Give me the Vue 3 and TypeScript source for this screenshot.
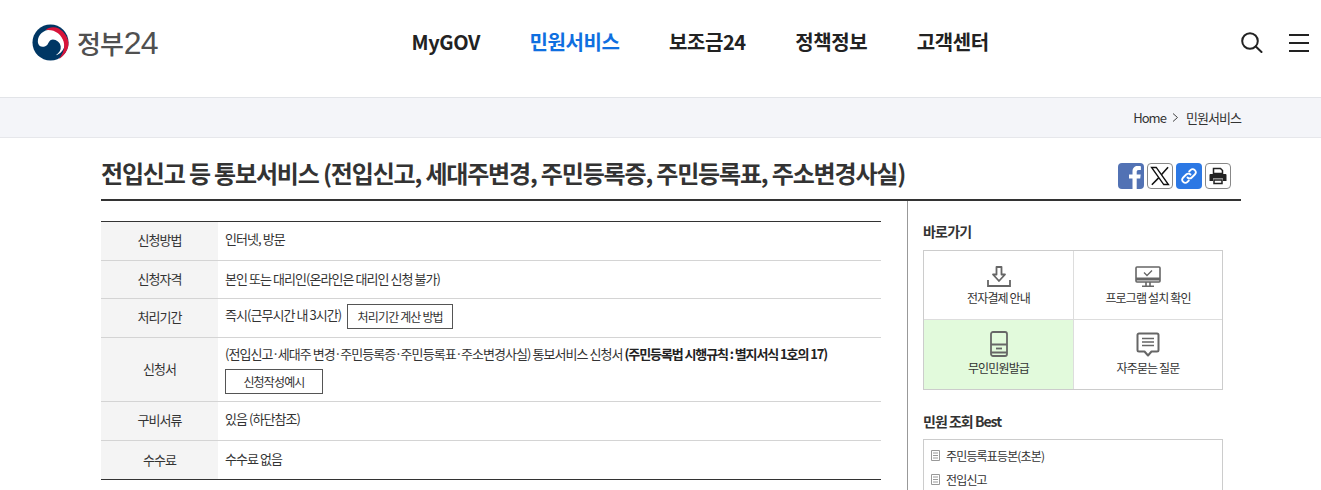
<script setup lang="ts">
const nav = [
  { label: 'MyGOV', active: false },
  { label: '민원서비스', active: true },
  { label: '보조금24', active: false },
  { label: '정책정보', active: false },
  { label: '고객센터', active: false },
]
const best = ['주민등록표등본(초본)', '전입신고']
const forms = ['전입신고', '세대주 변경', '주민등록증', '주민등록표', '주소변경사실']
</script>

<template>
  <div class="page">
    <header class="header">
      <div class="logo">
        <svg class="mark" width="37" height="37" viewBox="0 0 38 38">
          <circle cx="19" cy="19" r="18.5" fill="#003764" />
          <path d="M6 18C6 11 12 6 19 6C27 6 33.5 13 33.5 21C33.5 26 29 31 24.5 32C28 29.5 30 26.5 29.5 23C29 19 25 16 21.5 16C18 16 17.5 19 16 21C14 23.5 10 24 8 22.500C6.800 21.500 6 20 6 18Z" fill="#fff" />
          <path d="M14 6C17 3 23 2.500 27.500 4.500C33.500 8 37.800 14.500 37.500 21C37 27 32.500 33 27.500 36C31 31.500 33.500 26.500 33 21C32.500 14 26.500 7.500 19.500 6.500C17.500 6.200 15.500 6 14 6Z" fill="#d8143a" />
        </svg>
        <span class="logo-text"><span class="ko">정부</span>24</span>
      </div>
      <nav class="nav">
        <a v-for="n in nav" :key="n.label" :class="{ active: n.active }">{{ n.label }}</a>
      </nav>
      <div class="tools">
        <svg width="22" height="21" viewBox="0 0 22 21" fill="none" stroke="#222" stroke-width="2">
          <circle cx="9" cy="9" r="7.800" />
          <path d="M14.800 14.500 20.500 20" stroke-linecap="round" />
        </svg>
        <svg width="20" height="18" viewBox="0 0 20 18" fill="none" stroke="#222" stroke-width="2">
          <path d="M0 1h20M0 9h20M0 17h20" />
        </svg>
      </div>
    </header>

    <div class="crumb">
      <div class="crumb-in">
        <span>Home</span>
        <svg width="7" height="9" viewBox="0 0 7 9" fill="none" stroke="#444"><path d="M1 .5 5.500 4.500 1 8.500" /></svg>
        <span>민원서비스</span>
      </div>
    </div>

    <main class="wrap">
      <div class="title-row">
        <h1>전입신고 등 통보서비스 (전입신고, 세대주변경, 주민등록증, 주민등록표, 주소변경사실)</h1>
        <div class="share">
          <span class="sq fb">
            <svg width="26" height="26" viewBox="0 0 26 26"><path d="M14.500 26V15.500h-3.500v-4h3.500V8.500c0-3.500 2.100-5.400 5.200-5.400 1.500 0 2.800.1 3.200.2v3.600h-2.200c-1.700 0-2 .8-2 2v2.500h4l-.5 4h-3.500V26Z" fill="#fff" /></svg>
          </span>
          <span class="sq line">
            <svg width="22" height="22" viewBox="0 0 24 24" fill="none" stroke="#111"><path d="M2.800 2.700h5.100l13.300 18.600h-5.100Z" stroke-width="1.500" /><path d="M20.800 2.500 13.500 10.700M10.500 14 3.100 21.500" stroke-width="1.700" /></svg>
          </span>
          <span class="sq link">
            <svg width="18" height="18" viewBox="0 0 18 18" fill="none" stroke="#fff" stroke-width="1.800" stroke-linecap="round"><path d="M7.500 10.500a3 3 0 0 0 4.300 0l3-3a3 3 0 0 0-4.300-4.300L9.200 4.500" /><path d="M10.500 7.500a3 3 0 0 0-4.300 0l-3 3a3 3 0 0 0 4.300 4.300l1.300-1.300" /></svg>
          </span>
          <span class="sq line">
            <svg width="18" height="18" viewBox="0 0 18 18"><path d="M4.500 1.500h7l2 2v3h-9Z" fill="none" stroke="#222" stroke-width="1.500" /><path d="M1.500 7h15a1 1 0 0 1 1 1v6h-3.500v-2.500H4V14H.5V8a1 1 0 0 1 1-1Z" fill="#222" /><path d="M5 13h8v3.500H5Z" fill="none" stroke="#222" stroke-width="1.500" /></svg>
          </span>
        </div>
      </div>

      <div class="cols">
        <section class="main">
          <table class="info">
            <tbody>
              <tr class="r1"><th>신청방법</th><td>인터넷, 방문</td></tr>
              <tr class="r2"><th>신청자격</th><td>본인 또는 대리인(온라인은 대리인 신청 불가)</td></tr>
              <tr class="r3"><th>처리기간</th><td>즉시(근무시간 내 3시간)<a class="btn btn-a">처리기간 계산 방법</a></td></tr>
              <tr class="r4"><th>신청서</th><td>
                <div>(<template v-for="(f, i) in forms" :key="f"><span v-if="i" class="dot">·</span>{{ f }}</template>) 통보서비스 신청서 <b>(주민등록법 시행규칙 : 별지서식 1호의 17)</b></div>
                <a class="btn btn-b">신청작성예시</a>
              </td></tr>
              <tr class="r5"><th>구비서류</th><td>있음 (하단참조)</td></tr>
              <tr class="r6"><th>수수료</th><td>수수료 없음</td></tr>
            </tbody>
          </table>
        </section>

        <aside class="side">
          <h2>바로가기</h2>
          <div class="quick">
            <a class="q">
              <svg width="24" height="21" viewBox="0 0 24 21" fill="none" stroke="#666" stroke-width="1.800">
                <path d="M9.500 1h5v7.500h3.500L12 15 6 8.500h3.500Z" stroke-linejoin="round" />
                <path d="M1 14v6h22v-6" />
              </svg>
              <span>전자결제 안내</span>
            </a>
            <a class="q">
              <svg width="26" height="21" viewBox="0 0 26 21" fill="none" stroke="#666" stroke-width="1.600">
                <rect x="1" y="1" width="24" height="15" rx="1" />
                <path d="M1 13h24" stroke-width="3" />
                <path d="M9 6.500l3 3 5-5" stroke-width="1.300" />
                <path d="M11 16v4M15 16v4M7 20.200h12" />
              </svg>
              <span>프로그램 설치 확인</span>
            </a>
            <a class="q green">
              <svg width="18" height="26" viewBox="0 0 18 26" fill="none" stroke="#666" stroke-width="1.800">
                <rect x="1" y="1" width="16" height="24" rx="2" />
                <path d="M1 13.500h16M1 21.500h16" />
                <path d="M6 17.500h6" />
              </svg>
              <span>무인민원발급</span>
            </a>
            <a class="q">
              <svg width="24" height="25" viewBox="0 0 24 25" fill="none" stroke="#666" stroke-width="2">
                <path d="M3 1.500h18a1.500 1.500 0 0 1 1.500 1.500v15a1.500 1.500 0 0 1-1.500 1.500h-5.500L12 23.500l-3.500-4H3A1.500 1.500 0 0 1 1.500 18V3A1.500 1.500 0 0 1 3 1.500Z" stroke-linejoin="round" />
                <path d="M6 6.500h12M6 10h12M6 13.500h12" stroke-width="1.500" />
              </svg>
              <span>자주묻는 질문</span>
            </a>
          </div>

          <h2 class="h-best">민원 조회 Best</h2>
          <ul class="best">
            <li v-for="b in best" :key="b">
              <svg width="9" height="11" viewBox="0 0 9 11" fill="none" stroke="#999"><path d="M.5.500h8v10h-8ZM2 3h5M2 5.500h5M2 8h5" /></svg>
              <span>{{ b }}</span>
            </li>
          </ul>
        </aside>
      </div>
    </main>
  </div>
</template>

<style>
html, body { margin: 0; height: 490px; overflow: hidden; background: #fff; }
</style>

<style scoped>
.page {
  height: 490px;
  overflow: hidden;
  font-family: "Noto Sans CJK KR", "Noto Sans", sans-serif;
  color: #333;
  font-size: 13px;
  letter-spacing: -0.95px;
}
.header {
  display: flex;
  align-items: flex-start;
  position: relative;
  box-sizing: border-box;
  border-bottom: 1px solid #e2e4e8;
  height: 98px;
}
.logo { display: flex; align-items: center; gap: 8px; margin: 24px 0 0 32px; height: 37px; }
.logo-text { font-family: "Liberation Sans", sans-serif; font-size: 32px; color: #505050; letter-spacing: -1px; line-height: 37px; font-weight: 400; }
.ko { font-family: "Noto Sans CJK KR", sans-serif; font-size: 26px; font-weight: 500; letter-spacing: -1px; margin-right: 1px; }
.nav {
  position: absolute;
  left: 411.5px;
  top: 27px;
  display: flex;
  gap: 49.5px;
  font-size: 20px;
  font-weight: 700;
  line-height: 30px;
  color: #222;
  letter-spacing: -0.4px;
}
.nav .active { color: #0f6fe0; }
.tools {
  position: absolute;
  left: 1241px;
  top: 32px;
  display: flex;
  align-items: center;
  gap: 26px;
}
.crumb {
  height: 39px;
  background: #f4f5f9;
  border-bottom: 1px solid #e6e7eb;
}
.crumb-in {
  width: 1140px;
  margin-left: 101px;
  height: 39px;
  display: flex;
  justify-content: flex-end;
  align-items: center;
  gap: 6.5px;
  font-size: 13px;
  color: #333;
}
.wrap { width: 1140px; margin-left: 101px; }
.title-row {
  height: 63px;
  box-sizing: border-box;
  border-bottom: 2px solid #333;
  display: flex;
  justify-content: space-between;
  align-items: flex-start;
}
h1 {
  margin: 18px 0 0;
  font-size: 24px;
  line-height: 34px;
  font-weight: 700;
  color: #333;
  letter-spacing: -1.17px;
}
.share { display: flex; gap: 3px; margin: 25px 10px 0 0; }
.sq {
  width: 26px;
  height: 26px;
  box-sizing: border-box;
  border-radius: 4px;
  display: flex;
  align-items: center;
  justify-content: center;
  overflow: hidden;
}
.fb { background: #5272b4; }
.line { border: 1px solid #888; background: #fff; }
.link { background: #2c78e4; }
.cols { display: flex; }
.main { width: 807px; box-sizing: border-box; border-right: 1px solid #999; height: 300px; padding-top: 20px; }
.info {
  width: 780px;
  border-collapse: collapse;
  border-top: 1px solid #333;
  border-bottom: 1px solid #333;
  table-layout: fixed;
}
.info tr + tr { border-top: 1px solid #d4d4d4; }
.info th {
  width: 117px;
  background: #f4f4f4;
  font-weight: 400;
  color: #333;
  text-align: center;
  padding: 0 0 2px;
}
.info td { padding: 0 0 2px 7px; color: #333; line-height: 20px; }
.r1 { height: 39px; }
.r2 { height: 38px; }
.r3 { height: 39px; }
.r4 { height: 64px; }
.r5 { height: 39px; }
.r6 { height: 39px; }
.r1 th, .r1 td, .r3 th, .r3 td, .r5 th, .r5 td { padding-bottom: 4px; }
.info b { font-weight: 700; color: #222; letter-spacing: -1.1px; }
.dot { margin: 0 -0.5px; }
.btn {
  display: inline-block;
  box-sizing: border-box;
  height: 25px;
  line-height: 23px;
  border: 1px solid #555;
  text-align: center;
  color: #333;
  font-size: 12px;
  letter-spacing: -0.85px;
  background: #fff;
  vertical-align: middle;
}
.btn-a { width: 106px; margin-left: 6px; }
.btn-b { width: 98px; margin-top: 5px; display: block; }
.side { width: 300px; margin-left: 15px; padding-top: 19px; }
h2 {
  margin: 0;
  font-size: 14px;
  line-height: 22px;
  font-weight: 700;
  color: #333;
  letter-spacing: -0.8px;
}
.quick {
  margin-top: 8px;
  display: grid;
  grid-template-columns: 150px 148px;
  width: 300px;
  box-sizing: border-box;
  border: 1px solid #ccc;
  height: 140px;
  grid-template-rows: 69px 69px;
}
.q {
  display: flex;
  flex-direction: column;
  align-items: center;
  justify-content: flex-end;
  gap: 3px;
  font-size: 12px;
  letter-spacing: -0.85px;
  color: #333;
  padding-bottom: 13px;
  box-sizing: border-box;
}
.q:nth-child(odd) { border-right: 1px solid #ddd; }
.q:nth-child(-n+2) { border-bottom: 1px solid #ddd; }
.q span { line-height: 16px; }
.green { background: #e2fadc; }
.h-best { margin-top: 20px; letter-spacing: -1px; }
.best {
  list-style: none;
  margin: 7px 0 0;
  padding: 3px 7px;
  width: 300px;
  height: 100px;
  box-sizing: border-box;
  border: 1px solid #ccc;
}
.best li { display: flex; align-items: center; gap: 6px; height: 24px; font-size: 12px; letter-spacing: -0.85px; color: #333; }
</style>
